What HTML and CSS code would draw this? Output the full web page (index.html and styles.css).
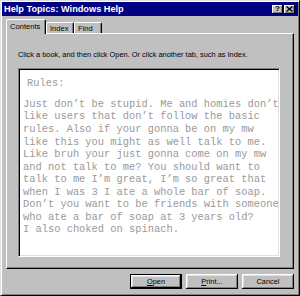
FILE: index.html
```html
<!DOCTYPE html>
<html>
<head>
<meta charset="utf-8">
<link rel="stylesheet" href="styles.css">
</head>
<body>
<div class="window">
  <div class="titlebar">
    <span class="title">Help Topics: Windows Help</span>
    <div class="tbtns">
      <span class="tbtn">?</span>
      <span class="tbtn"><svg width="7" height="6" viewBox="0 0 7 6"><path d="M0.5 0.5 L6.5 5.5 M6.5 0.5 L0.5 5.5" stroke="#000" stroke-width="1.4" fill="none"/></svg></span>
    </div>
  </div>
  <div class="body">
    <div class="tabs">
      <div class="tab active">Contents</div>
      <div class="tab">Index</div>
      <div class="tab">Find</div>
    </div>
    <div class="panel">
      <p class="hint">Click a book, and then click Open. Or click another tab, such as Index.</p>
      <div class="textbox">
        <p class="mono rules">Rules:</p>
        <p class="mono">Just don’t be stupid. Me and homies don’t<br>like users that don’t follow the basic<br>rules. Also if your gonna be on my mw<br>like this you might as well talk to me.<br>Like bruh your just gonna come on my mw<br>and not talk to me? You should want to<br>talk to me I’m great, I’m so great that<br>when I was 3 I ate a whole bar of soap.<br>Don’t you want to be friends with someone<br>who ate a bar of soap at 3 years old?<br>I also choked on spinach.</p>
      </div>
    </div>
    <div class="buttons">
      <div class="btn default"><span class="ul">O</span>pen</div>
      <div class="btn"><span class="ul">P</span>rint...</div>
      <div class="btn">Cancel</div>
    </div>
  </div>
</div>
</body>
</html>
```
FILE: styles.css
```css
* { box-sizing: border-box; }
body {
  margin: 0;
  background: #c0c0c0;
  font-family: "Liberation Sans", Arial, sans-serif;
}
.window {
  width: 300px;
  height: 296px;
  background: #c0c0c0;
  border: 1px solid;
  border-color: #dfdfdf #000 #000 #dfdfdf;
  box-shadow: inset 1px 1px #fff, inset -1px -1px #808080;
  padding: 1px;
  display: flex;
  flex-direction: column;
}
.titlebar {
  height: 14px;
  background: #000080;
  color: #fff;
  display: flex;
  align-items: center;
  justify-content: space-between;
  padding: 0 3px 0 2px;
}
.title {
  font-weight: bold;
  font-size: 9.2px;
  line-height: 11px;
}
.tbtns {
  display: flex;
  gap: 1px;
}
.tbtn {
  width: 11px;
  height: 9px;
  background: #c0c0c0;
  box-shadow: inset -1px -1px #000, inset 1px 1px #fff, inset -2px -2px #808080;
  color: #000;
  font-weight: bold;
  font-size: 8px;
  line-height: 9px;
  display: flex;
  align-items: center;
  justify-content: center;
  padding-bottom: 1px;
}
.body {
  padding: 3px 4px 0 4px;
  display: flex;
  flex-direction: column;
}
.tabs {
  display: flex;
  align-items: flex-end;
  height: 15px;
  margin-bottom: -1px;
  position: relative;
  z-index: 1;
}
.tab {
  height: 11px;
  margin-bottom: 1px;
  font-size: 7.6px;
  line-height: 9px;
  color: #000;
  background: #c0c0c0;
  border-top: 1px solid #fff;
  border-left: 1px solid #fff;
  border-right: 1px solid #000;
  border-radius: 2px 2px 0 0;
  box-shadow: inset -1px 0 #808080;
  padding: 1px 0 0 3px;
  width: 28px;
}
.tab.active {
  height: 15px;
  margin-bottom: 0;
  width: 40px;
  padding: 2px 0 0 3px;
}
.panel {
  height: 236px;
  border: 1px solid;
  border-color: #fff #000 #000 #fff;
  box-shadow: inset -1px -1px #808080;
  padding: 16px 13px 11px 11px;
  display: flex;
  flex-direction: column;
}
.hint {
  margin: 0 0 9px 0;
  font-size: 7.4px;
  line-height: 9px;
  color: #000;
  white-space: nowrap;
}
.textbox {
  flex: 1;
  background: #fff;
  border: 1px solid;
  border-color: #808080 #fff #fff #808080;
  box-shadow: inset 1px 1px #000, inset -1px -1px #dfdfdf;
  padding: 8px 4px 0 4px;
}
.mono {
  margin: 0;
  font-family: "Liberation Mono", "Courier New", monospace;
  font-size: 10.4px;
  line-height: 12.55px;
  color: #9a9a9a;
  white-space: nowrap;
}
.rules {
  margin: 0 0 8.4px 4px;
}
.buttons {
  display: flex;
  justify-content: flex-end;
  gap: 4px;
  margin-top: 5px;
}
.btn {
  width: 52px;
  height: 15px;
  background: #c0c0c0;
  box-shadow: inset -1px -1px #000, inset 1px 1px #fff, inset -2px -2px #808080, inset 2px 2px #dfdfdf;
  font-size: 7.4px;
  line-height: 9px;
  color: #000;
  display: flex;
  align-items: center;
  justify-content: center;
}
.btn.default {
  border: 1px solid #000;
}
.ul {
  text-decoration: underline;
}
```
